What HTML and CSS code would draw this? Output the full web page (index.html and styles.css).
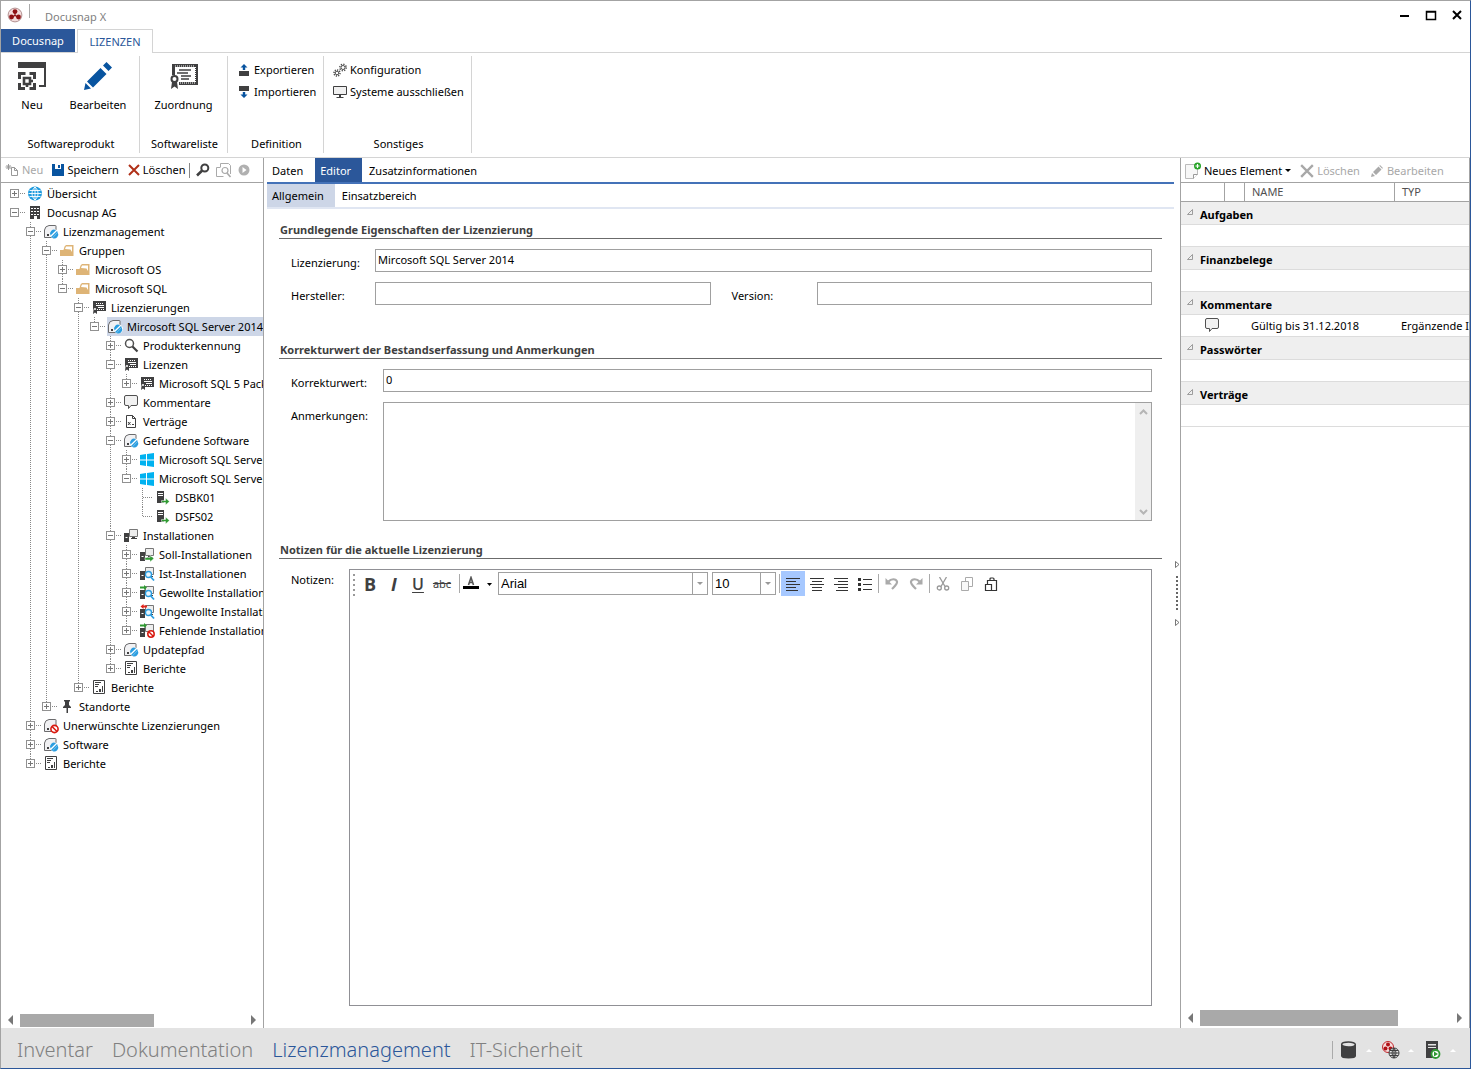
FILE: index.html
```html
<!DOCTYPE html>
<html lang="de">
<head>
<meta charset="utf-8">
<title>Docusnap X</title>
<meta name="viewport" content="width=device-width, initial-scale=1">
<link rel="stylesheet" href="styles.css">
</head>
<body>
<svg class="sprite" aria-hidden="true">
  <symbol id="i-logo" viewBox="0 0 16 16"><circle cx="8" cy="8" r="6.900" fill="#f3dcdc" stroke="#a88" stroke-width=".9"/><g fill="#8f1114"><circle cx="8" cy="4.600" r="2.400"/><circle cx="4.500" cy="10" r="2.400"/><circle cx="11.500" cy="10" r="2.400"/><path d="M7.400 5h1.200v4H7.400zM4.500 10l3.500-2.600 3.500 2.600-1 1L8 9l-2.500 2z"/></g></symbol>
  <symbol id="i-new" viewBox="0 0 28 28"><path fill="#404041" d="M0 0h28v6H0z"/><path fill="none" stroke="#404041" stroke-width="2" d="M27 5v19h-6"/><path fill="none" stroke="#404041" stroke-width="3" d="M1.500 17v-5.500h6M11.500 11.500h5v5.500M16.500 21v5.500h-5M7 26.500H1.500V21"/><path fill="none" stroke="#404041" stroke-width="2.600" d="M6 16h6v6H6zM9 22v3M12 19h3"/></symbol>
  <symbol id="i-pencil-big" viewBox="0 0 28 28"><path fill="#0854a0" d="M0 28l1.500-7 5.500 5.500zM3 19.500L16.500 6l6 6L9 25.500zM19 3.500L22.500 0 28 5.500 24.500 9z"/></symbol>
  <symbol id="i-cert" viewBox="0 0 28 28"><path fill="none" stroke="#404041" stroke-width="3" d="M3.500 13V3.500h23v18H9"/><path fill="none" stroke="#fff" stroke-width="1" stroke-dasharray="1 1" d="M5 4h19M25.500 5v15M10 21h15"/><path stroke="#404041" stroke-width="1.400" d="M9 8h12M7 11h11M11 14h10M11 17h8"/><circle cx="4.500" cy="17" r="3" fill="#fff" stroke="#404041" stroke-width="2"/><path fill="#404041" d="M2 20h5l1 7-3.500-2.500L1 27z"/></symbol>
  <symbol id="i-export" viewBox="0 0 12 14"><path fill="#404041" d="M1 8h10v5H1z"/><path fill="#0854a0" d="M6 1l3.500 3.500H7.200V7H4.800V4.500H2.500z"/></symbol>
  <symbol id="i-import" viewBox="0 0 12 14"><path fill="#404041" d="M1 1h10v5H1z"/><path fill="#0854a0" d="M6 13L2.500 9.500h2.300V7h2.400v2.500h2.300z"/></symbol>
  <symbol id="i-gears" viewBox="0 0 14 14"><g fill="none" stroke="#505050"><circle cx="10" cy="4.500" r="2"/><circle cx="10" cy="4.500" r="3.200" stroke-width="1.500" stroke-dasharray="1.300 1.200"/><circle cx="4" cy="10" r="1.800"/><circle cx="4" cy="10" r="3" stroke-width="1.500" stroke-dasharray="1.200 1.100"/></g></symbol>
  <symbol id="i-monitor" viewBox="0 0 14 14"><path fill="#f0f0f0" stroke="#404041" d="M.5 1.500h13v8H.5z"/><path fill="#404041" d="M6 10h2v2H6zM3.500 12h7v1h-7z"/></symbol>
  <symbol id="i-doc-new" viewBox="0 0 14 14"><path fill="none" stroke="#999" d="M6.500 4.500h3l3 3v5h-6zM9.500 4.500v3h3M3.500 1v6M.5 4h6M1.500 2l4 4M5.500 2l-4 4"/></symbol>
  <symbol id="i-save" viewBox="0 0 12 12"><path fill="#0854a0" d="M0 0h12v12H0z"/><path fill="#fff" d="M3 0h6v5H3z"/><path fill="#0854a0" d="M6 1h2v3H6z"/></symbol>
  <symbol id="i-x" viewBox="0 0 12 12"><path fill="none" stroke="currentColor" stroke-width="2" d="M1 1l10 10M11 1L1 11"/></symbol>
  <symbol id="i-key" viewBox="0 0 14 14"><circle cx="8.800" cy="5" r="3.500" fill="none" stroke="#404041" stroke-width="2"/><path stroke="#404041" stroke-width="2.600" d="M6.200 7.500L1 12.500"/></symbol>
  <symbol id="i-docfind" viewBox="0 0 16 16"><path fill="none" stroke="#aaa" d="M4.500 5V1.500h8l2 2V12M4.500 5.500h-4v9h7"/><circle cx="9" cy="8.500" r="3" fill="#fff" stroke="#aaa" stroke-width="1.200"/><path stroke="#aaa" stroke-width="1.600" d="M11 11l3.500 4"/></symbol>
  <symbol id="i-play" viewBox="0 0 12 12"><circle cx="6" cy="6" r="5.500" fill="#b0b0b0"/><path fill="#fff" d="M4.500 3l4 3-4 3z"/></symbol>
  <symbol id="i-globe" viewBox="0 0 16 16"><circle cx="7" cy="7.500" r="7" fill="#1f9bde"/><path fill="none" stroke="#fff" stroke-width=".9" d="M7 1v13M.5 7.500h13M1.500 4.500h11M1.500 10.500h11M7 1c-4 3.500-4 9.500 0 13 4-3.500 4-9.500 0-13"/></symbol>
  <symbol id="i-building" viewBox="0 0 16 16"><path fill="#404041" d="M2 1h10v13H9v-3H6v3H2z"/><path fill="#fff" d="M3 3h2v1H3zM6 3h2v1H6zM9 3h2v1H9zM3 6h2v1H3zM6 6h2v1H6zM9 6h2v1H9zM3 9h2v1H3zM6 9h2v1H6zM9 9h2v1H9z"/></symbol>
  <symbol id="i-soft-base" viewBox="0 0 16 16"><path fill="#f1f1f3" stroke="#6b6b6d" d="M.5 13.500V6Q1 2 5 1.500h6.500q.5 0 .5.500v11.500z"/><path fill="#404041" d="M3 10h2v2H3z"/></symbol>
  <symbol id="i-soft" viewBox="0 0 16 16"><use href="#i-soft-base"/><circle cx="10.500" cy="10" r="4.500" fill="#fff"/><path fill="#2a9de0" d="M6.500 11.500a4 4 0 0 1 5.500-5.300zM8.500 14l5.300-5.500A4 4 0 0 1 8.500 14z"/><path fill="#2a9de0" d="M7 13l6-6 .8 1.300L8.300 14z"/></symbol>
  <symbol id="i-soft-no" viewBox="0 0 16 16"><use href="#i-soft-base"/><circle cx="10.500" cy="11" r="3.600" fill="#fff" stroke="#d9190f" stroke-width="1.600"/><path stroke="#d9190f" stroke-width="1.600" d="M8 8.500l5 5"/></symbol>
  <symbol id="i-folder" viewBox="0 0 16 16"><path fill="#deb476" d="M0 7h3.500l1-3.500L6 2h7.500v11H0z"/><path fill="#fff" d="M5 6l1-2.500h6V9l-1.500-2.500z"/></symbol>
  <symbol id="i-lic" viewBox="0 0 16 16"><path fill="#404041" d="M1 1h13v10H5v3L3 12.500 1 14l.5-4L1 8z"/><path stroke="#fff" d="M4 3.500h8" stroke-dasharray="1 1"/><path stroke="#fff" d="M4 5.500h8M6 7.500h6"/><path stroke="#fff" d="M5 9.500h7" stroke-dasharray="1 1"/><circle cx="3" cy="9" r="1" fill="#fff"/></symbol>
  <symbol id="i-search" viewBox="0 0 16 16"><circle cx="5.500" cy="5.500" r="4" fill="#fff" stroke="#505050" stroke-width="1.500"/><path stroke="#404041" stroke-width="2.200" d="M8.500 8.500l5 5"/></symbol>
  <symbol id="i-comment" viewBox="0 0 16 16"><path fill="#f1f1f1" stroke="#505050" d="M2 .5h10q1.500 0 1.500 1.500v7q0 1.500-1.500 1.500H7l-2.500 3v-3H2Q.5 10.500.5 9V2Q.5.500 2 .5z"/></symbol>
  <symbol id="i-contract" viewBox="0 0 16 16"><path fill="#fff" stroke="#404041" d="M2.500 1.500h6l3 3v9h-9zM8.500 1.500v3h3"/><path stroke="#404041" d="M4 8l2.500 3M6.500 8L4 11M8 10.500h2"/></symbol>
  <symbol id="i-win" viewBox="0 0 16 16"><path fill="#00b2f0" d="M0 3l6-.9V7.500H0zM7 2l7-1v6.500H7zM0 8.500h6V14l-6-.9zM7 8.500h7V15l-7-1z"/></symbol>
  <symbol id="i-srv" viewBox="0 0 16 16"><path fill="#404041" d="M1 1h7v12H1z"/><path stroke="#fff" d="M2 3.500h5M2 5.500h5"/><path fill="#2f9a32" stroke="#fff" stroke-width=".5" d="M5.500 10.500h4V8l4 3.500-4 3.500v-2.500h-4z"/></symbol>
  <symbol id="i-pc" viewBox="0 0 16 16"><path fill="#404041" d="M0 5h5v9H0z"/><path fill="#fff" d="M1.500 9h2v1h-2z"/><path fill="#eee" stroke="#777" d="M5.500 1.500h8v7h-8z"/><path fill="#404041" d="M8 9h3v1H8zM7 10h6v1H7z"/></symbol>
  <symbol id="i-pc-soll" viewBox="0 0 16 16"><use href="#i-pc"/><path fill="#2f9a32" stroke="#fff" stroke-width=".5" d="M5 10.500h5V8.500l4 3-4 3.500v-2H5z"/></symbol>
  <symbol id="i-lens" viewBox="0 0 16 16"><circle cx="8.500" cy="8.500" r="3" fill="#e8f6ff" stroke="#2a9de0" stroke-width="1.300"/><path stroke="#2a9de0" stroke-width="1.800" d="M10.800 11l3.200 3.500"/></symbol>
  <symbol id="i-pc-ist" viewBox="0 0 16 16"><use href="#i-pc"/><use href="#i-lens"/></symbol>
  <symbol id="i-pc-want" viewBox="0 0 16 16"><use href="#i-pc"/><use href="#i-lens"/><path fill="#2f9a32" d="M0 1.500h4V0l3 2.500L4 5V3.500H0z"/></symbol>
  <symbol id="i-pc-unw" viewBox="0 0 16 16"><use href="#i-pc"/><use href="#i-lens"/><path fill="#e2231a" d="M7 1.500H3.500V0L.5 2.500l3 2.500V3.500H7z"/></symbol>
  <symbol id="i-pc-miss" viewBox="0 0 16 16"><use href="#i-pc"/><circle cx="11" cy="11" r="3.200" fill="#fff" stroke="#d9190f" stroke-width="1.500"/><path stroke="#d9190f" stroke-width="1.500" d="M9 9l4 4"/><path fill="#2f9a32" d="M0 1.500h4V0l3 2.500L4 5V3.500H0z"/></symbol>
  <symbol id="i-report" viewBox="0 0 16 16"><path fill="#fff" stroke="#404041" d="M1.500.5h11v13h-11z"/><path fill="#404041" d="M3 2h6v1H3zM3 4h4v1H3zM3 6h3v1H3zM4 11h2v1H4zM7 9h2v3H7zM10 6h1v6h-1z"/></symbol>
  <symbol id="i-pin" viewBox="0 0 16 16"><path fill="#404041" d="M4 1h6v1L9 3v3l2 2v1H8v5H6.500V9H3V8l2-2V3L4 2z"/></symbol>
  <symbol id="i-elem" viewBox="0 0 16 18"><path fill="#f7f7f7" stroke="#bbb" d="M.5 2.500h12v10l-4 4h-8z"/><path fill="#fff" stroke="#999" d="M8.500 16.500v-4h4"/><circle cx="12.500" cy="4" r="3.500" fill="#27a327"/><path stroke="#fff" stroke-width="1.200" d="M10.500 4h4M12.500 2v4"/></symbol>
  <symbol id="i-pencil" viewBox="0 0 12 12"><path fill="#aaa" d="M0 12l1-4 3 3zM2 7l5.500-5.500 3 3L5 10zM8.300.8L9 0l3 3-.8.8z"/></symbol>
  <symbol id="i-undo" viewBox="0 0 14 14"><path fill="none" stroke="#aaa" stroke-width="2.200" d="M3.500 4.500C6 1.500 11 1.500 12 4.500c.6 2.500-2.500 5-5 7.500"/><path fill="#aaa" d="M.5 1v6.500H7z"/></symbol>
  <symbol id="i-cut" viewBox="0 0 14 14"><path stroke="#999" stroke-width="1.300" d="M3.500 0L9 9.500M10.500 0L5 9.500"/><g fill="none" stroke="#999" stroke-width="1.300"><circle cx="3.300" cy="11" r="2"/><circle cx="10.700" cy="11" r="2"/></g></symbol>
  <symbol id="i-copy" viewBox="0 0 14 14"><path fill="#fff" stroke="#aaa" d="M5.500.5h7v9h-7z"/><path fill="#f8f8f8" stroke="#aaa" d="M1.500 4.500h7v9h-7z"/></symbol>
  <symbol id="i-paste" viewBox="0 0 14 14"><path fill="none" stroke="#333" stroke-width="1.200" d="M3.500 7V3.500h9v10H8M6 3V2q0-1 1-1h2q1 0 1 1v1"/><path fill="#fff" stroke="#333" stroke-width="1.200" d="M1.500 7.500h6v6h-6z"/></symbol>
  <symbol id="i-db" viewBox="0 0 16 18"><path fill="#404041" d="M0 3h15v12q0 2.500-7.500 2.500T0 15z"/><ellipse cx="7.500" cy="3.500" rx="6.800" ry="2.500" fill="#e3e3e3" stroke="#404041" stroke-width="1.500"/></symbol>
  <symbol id="i-net" viewBox="0 0 18 18"><circle cx="6" cy="6" r="5.500" fill="#f6dcdc" stroke="#c1272d"/><g fill="#b01217"><circle cx="6" cy="3.500" r="2"/><circle cx="3.500" cy="7.500" r="2"/><circle cx="8.500" cy="7.500" r="2"/></g><circle cx="12" cy="12" r="5" fill="#e8e8e8" stroke="#404041"/><path fill="none" stroke="#404041" d="M12 7v10M7 12h10M8 9.500h8M8 14.500h8M12 7q-4 5 0 10 4-5 0-10"/></symbol>
  <symbol id="i-srvrun" viewBox="0 0 16 18"><path fill="#404041" d="M1 0h12v17H1z"/><path fill="#e3e3e3" d="M3 3h8v1.500H3zM3 6h8v1H3z"/><circle cx="10.500" cy="13" r="4" fill="#fff" stroke="#2f9a32" stroke-width="1.800"/><path fill="#2f9a32" d="M9 10.500l4 2.500-4 2.500z"/></symbol>
</svg>

<div class="app">
  <header class="titlebar">
    <svg class="ic16"><use href="#i-logo"/></svg>
    <span class="titlebar-sep"></span>
    <span class="titlebar-name">Docusnap X</span>
    <div class="window-buttons">
      <button aria-label="Minimieren"><svg viewBox="0 0 12 12"><path d="M1 7h9" stroke="#000" stroke-width="2"/></svg></button>
      <button aria-label="Maximieren"><svg viewBox="0 0 12 12"><path d="M1.500 2.500h9v8h-9zM1 3h10" fill="none" stroke="#000" stroke-width="1.500"/></svg></button>
      <button aria-label="Schließen"><svg viewBox="0 0 12 12"><path d="M2 2l8 8M10 2l-8 8" stroke="#000" stroke-width="2"/></svg></button>
    </div>
  </header>

  <nav class="ribbon-tabs">
    <button class="ribbon-file">Docusnap</button>
    <button class="ribbon-tab">LIZENZEN</button>
  </nav>

  <div class="ribbon">
    <section class="ribbon-group">
      <div class="ribbon-big pair">
        <button class="big-btn"><svg><use href="#i-new"/></svg>Neu</button>
        <button class="big-btn"><svg><use href="#i-pencil-big"/></svg>Bearbeiten</button>
      </div>
      <span class="ribbon-caption">Softwareprodukt</span>
    </section>
    <section class="ribbon-group">
      <div class="ribbon-big">
        <button class="big-btn"><svg><use href="#i-cert"/></svg>Zuordnung</button>
      </div>
      <span class="ribbon-caption">Softwareliste</span>
    </section>
    <section class="ribbon-group">
      <div class="ribbon-small">
        <button class="small-btn"><svg class="ic12x14"><use href="#i-export"/></svg>Exportieren</button>
        <button class="small-btn"><svg class="ic12x14"><use href="#i-import"/></svg>Importieren</button>
      </div>
      <span class="ribbon-caption">Definition</span>
    </section>
    <section class="ribbon-group">
      <div class="ribbon-small tight">
        <button class="small-btn"><svg class="ic14"><use href="#i-gears"/></svg>Konfiguration</button>
        <button class="small-btn"><svg class="ic14"><use href="#i-monitor"/></svg>Systeme ausschließen</button>
      </div>
      <span class="ribbon-caption">Sonstiges</span>
    </section>
  </div>

  <main class="workspace">
    <aside class="nav-pane">
      <div class="pane-toolbar">
        <button class="tool" disabled><svg class="ic14"><use href="#i-doc-new"/></svg>Neu</button>
        <button class="tool"><svg class="ic12"><use href="#i-save"/></svg>Speichern</button>
        <button class="tool"><svg class="ic12 red"><use href="#i-x"/></svg>Löschen</button>
        <span class="tool-sep"></span>
        <button class="tool" aria-label="Schlüssel"><svg class="ic14"><use href="#i-key"/></svg></button>
        <button class="tool" aria-label="Suchen"><svg class="ic16"><use href="#i-docfind"/></svg></button>
        <button class="tool" aria-label="Ausführen"><svg class="ic12"><use href="#i-play"/></svg></button>
      </div>
      <ul class="tree">
        <li><div class="node"><button class="tog plus" aria-label="Öffnen"></button><a href="#"><svg><use href="#i-globe"/></svg>Übersicht</a></div></li>
        <li><div class="node"><button class="tog" aria-label="Schließen"></button><a href="#"><svg><use href="#i-building"/></svg>Docusnap AG</a></div>
          <ul>
            <li><div class="node"><button class="tog" aria-label="Schließen"></button><a href="#"><svg><use href="#i-soft"/></svg>Lizenzmanagement</a></div>
              <ul>
                <li><div class="node"><button class="tog" aria-label="Schließen"></button><a href="#"><svg><use href="#i-folder"/></svg>Gruppen</a></div>
                  <ul>
                    <li><div class="node"><button class="tog plus" aria-label="Öffnen"></button><a href="#"><svg><use href="#i-folder"/></svg>Microsoft OS</a></div></li>
                    <li><div class="node"><button class="tog" aria-label="Schließen"></button><a href="#"><svg><use href="#i-folder"/></svg>Microsoft SQL</a></div>
                      <ul>
                        <li><div class="node"><button class="tog" aria-label="Schließen"></button><a href="#"><svg><use href="#i-lic"/></svg>Lizenzierungen</a></div>
                          <ul>
                            <li><div class="node"><button class="tog" aria-label="Schließen"></button><a href="#" class="selected"><svg><use href="#i-soft"/></svg>Mircosoft SQL Server 2014</a></div>
                              <ul>
                                <li><div class="node"><button class="tog plus" aria-label="Öffnen"></button><a href="#"><svg><use href="#i-search"/></svg>Produkterkennung</a></div></li>
                                <li><div class="node"><button class="tog" aria-label="Schließen"></button><a href="#"><svg><use href="#i-lic"/></svg>Lizenzen</a></div>
                                  <ul>
                                    <li><div class="node"><button class="tog plus" aria-label="Öffnen"></button><a href="#"><svg><use href="#i-lic"/></svg>Microsoft SQL 5 Pack</a></div></li>
                                  </ul>
                                </li>
                                <li><div class="node"><button class="tog plus" aria-label="Öffnen"></button><a href="#"><svg><use href="#i-comment"/></svg>Kommentare</a></div></li>
                                <li><div class="node"><button class="tog plus" aria-label="Öffnen"></button><a href="#"><svg><use href="#i-contract"/></svg>Verträge</a></div></li>
                                <li><div class="node"><button class="tog" aria-label="Schließen"></button><a href="#"><svg><use href="#i-soft"/></svg>Gefundene Software</a></div>
                                  <ul>
                                    <li><div class="node"><button class="tog plus" aria-label="Öffnen"></button><a href="#"><svg><use href="#i-win"/></svg>Microsoft SQL Server</a></div></li>
                                    <li><div class="node"><button class="tog" aria-label="Schließen"></button><a href="#"><svg><use href="#i-win"/></svg>Microsoft SQL Server</a></div>
                                      <ul>
                                        <li><div class="node leaf"><a href="#"><svg><use href="#i-srv"/></svg>DSBK01</a></div></li>
                                        <li><div class="node leaf"><a href="#"><svg><use href="#i-srv"/></svg>DSFS02</a></div></li>
                                      </ul>
                                    </li>
                                  </ul>
                                </li>
                                <li><div class="node"><button class="tog" aria-label="Schließen"></button><a href="#"><svg><use href="#i-pc"/></svg>Installationen</a></div>
                                  <ul>
                                    <li><div class="node"><button class="tog plus" aria-label="Öffnen"></button><a href="#"><svg><use href="#i-pc-soll"/></svg>Soll-Installationen</a></div></li>
                                    <li><div class="node"><button class="tog plus" aria-label="Öffnen"></button><a href="#"><svg><use href="#i-pc-ist"/></svg>Ist-Installationen</a></div></li>
                                    <li><div class="node"><button class="tog plus" aria-label="Öffnen"></button><a href="#"><svg><use href="#i-pc-want"/></svg>Gewollte Installationen</a></div></li>
                                    <li><div class="node"><button class="tog plus" aria-label="Öffnen"></button><a href="#"><svg><use href="#i-pc-unw"/></svg>Ungewollte Installationen</a></div></li>
                                    <li><div class="node"><button class="tog plus" aria-label="Öffnen"></button><a href="#"><svg><use href="#i-pc-miss"/></svg>Fehlende Installationen</a></div></li>
                                  </ul>
                                </li>
                                <li><div class="node"><button class="tog plus" aria-label="Öffnen"></button><a href="#"><svg><use href="#i-soft"/></svg>Updatepfad</a></div></li>
                                <li><div class="node"><button class="tog plus" aria-label="Öffnen"></button><a href="#"><svg><use href="#i-report"/></svg>Berichte</a></div></li>
                              </ul>
                            </li>
                          </ul>
                        </li>
                        <li><div class="node"><button class="tog plus" aria-label="Öffnen"></button><a href="#"><svg><use href="#i-report"/></svg>Berichte</a></div></li>
                      </ul>
                    </li>
                  </ul>
                </li>
                <li><div class="node"><button class="tog plus" aria-label="Öffnen"></button><a href="#"><svg><use href="#i-pin"/></svg>Standorte</a></div></li>
              </ul>
            </li>
            <li><div class="node"><button class="tog plus" aria-label="Öffnen"></button><a href="#"><svg><use href="#i-soft-no"/></svg>Unerwünschte Lizenzierungen</a></div></li>
            <li><div class="node"><button class="tog plus" aria-label="Öffnen"></button><a href="#"><svg><use href="#i-soft"/></svg>Software</a></div></li>
            <li><div class="node"><button class="tog plus" aria-label="Öffnen"></button><a href="#"><svg><use href="#i-report"/></svg>Berichte</a></div></li>
          </ul>
        </li>
      </ul>
      <div class="hscroll">
        <span class="arrow-left"></span>
        <span class="track"><span class="thumb"></span></span>
        <span class="arrow-right"></span>
      </div>
    </aside>

    <div class="center">
      <div class="content">
        <nav class="tabs">
          <button>Daten</button>
          <button class="active">Editor</button>
          <button>Zusatzinformationen</button>
        </nav>
        <nav class="subtabs">
          <button class="active">Allgemein</button>
          <button>Einsatzbereich</button>
        </nav>
        <form class="form">
          <section>
            <h2>Grundlegende Eigenschaften der Lizenzierung</h2>
            <div class="field-row">
              <label for="lizenzierung">Lizenzierung:</label>
              <input id="lizenzierung" type="text" value="Mircosoft SQL Server 2014">
            </div>
            <div class="field-row two">
              <label for="hersteller">Hersteller:</label>
              <input id="hersteller" type="text">
              <label for="version" class="second">Version:</label>
              <input id="version" type="text">
            </div>
          </section>
          <section class="correction">
            <h2>Korrekturwert der Bestandserfassung und Anmerkungen</h2>
            <div class="field-row wide">
              <label for="korrektur">Korrekturwert:</label>
              <input id="korrektur" type="text" value="0">
            </div>
            <div class="field-row wide">
              <label for="anmerkungen">Anmerkungen:</label>
              <div class="memo">
                <textarea id="anmerkungen"></textarea>
                <div class="vscroll">
                  <svg viewBox="0 0 9 6"><path d="M1 5l3.500-3.500L8 5" fill="none" stroke="#b5b5b5" stroke-width="2"/></svg>
                  <svg viewBox="0 0 9 6"><path d="M1 1l3.500 3.500L8 1" fill="none" stroke="#b5b5b5" stroke-width="2"/></svg>
                </div>
              </div>
            </div>
          </section>
          <section class="notes">
            <h2>Notizen für die aktuelle Lizenzierung</h2>
            <div class="field-row note">
              <label for="notizen">Notizen:</label>
              <div class="rte">
                <div class="rte-bar">
                  <span class="grip"></span>
                  <button type="button" class="rte-b">B</button>
                  <button type="button" class="rte-i">I</button>
                  <button type="button" class="rte-u">U</button>
                  <button type="button" class="rte-s">abc</button>
                  <span class="rte-sep"></span>
                  <button type="button" class="rte-color" aria-label="Schriftfarbe"><svg viewBox="0 0 30 16"><path d="M5.500 9L8 1.500 10.500 9M6.500 6.500h3" fill="none" stroke="#555" stroke-width="1.600"/><path d="M0 10h16v3H0z"/><path d="M24 7h5l-2.500 3z"/></svg></button>
                  <span class="combo combo-font"><select aria-label="Schriftart"><option>Arial</option></select></span>
                  <span class="combo combo-size"><select aria-label="Schriftgröße"><option>10</option></select></span>
                  <span class="rte-sep near"></span>
                  <button type="button" class="active" aria-label="Linksbündig"><svg viewBox="0 0 14 14"><path d="M0 1.500h14M0 4.500h10M0 7.500h14M0 10.500h10M0 13.500h12" stroke="#333"/></svg></button>
                  <button type="button" aria-label="Zentriert"><svg viewBox="0 0 14 14"><path d="M0 1.500h14M2 4.500h10M0 7.500h14M2 10.500h10M2 13.500h10" stroke="#333"/></svg></button>
                  <button type="button" aria-label="Rechtsbündig"><svg viewBox="0 0 14 14"><path d="M0 1.500h14M4 4.500h10M0 7.500h14M4 10.500h10M2 13.500h12" stroke="#333"/></svg></button>
                  <button type="button" aria-label="Liste"><svg viewBox="0 0 14 14"><path d="M5 2.500h9M5 7.500h9M5 12.500h9" stroke="#333"/><path d="M0 1h3v3H0zM0 6h3v3H0zM0 11h3v3H0z" fill="#333"/></svg></button>
                  <span class="rte-sep near"></span>
                  <button type="button" aria-label="Rückgängig"><svg><use href="#i-undo"/></svg></button>
                  <button type="button" aria-label="Wiederholen"><svg class="flip"><use href="#i-undo"/></svg></button>
                  <span class="rte-sep near"></span>
                  <button type="button" aria-label="Ausschneiden"><svg><use href="#i-cut"/></svg></button>
                  <button type="button" aria-label="Kopieren"><svg><use href="#i-copy"/></svg></button>
                  <button type="button" aria-label="Einfügen"><svg><use href="#i-paste"/></svg></button>
                </div>
                <textarea id="notizen"></textarea>
              </div>
            </div>
          </section>
        </form>
      </div>
      <div class="splitter">
        <svg viewBox="0 0 5 7"><path d="M.5.5v6l3.500-3z" fill="#fff" stroke="#555" stroke-width=".8"/></svg>
        <span class="splitter-dots"></span>
        <svg viewBox="0 0 5 7"><path d="M.5.5v6l3.500-3z" fill="#fff" stroke="#555" stroke-width=".8"/></svg>
      </div>
    </div>

    <aside class="detail-pane">
      <div class="pane-toolbar detail-toolbar">
        <button class="tool"><svg class="elem"><use href="#i-elem"/></svg>Neues Element<span class="caret"></span></button>
        <button class="tool" disabled><svg class="ic14"><use href="#i-x"/></svg>Löschen</button>
        <button class="tool" disabled><svg class="ic12"><use href="#i-pencil"/></svg>Bearbeiten</button>
      </div>
      <div class="table-wrap">
        <table>
          <colgroup><col class="c1"><col class="c2"><col class="c3"><col class="c4"></colgroup>
          <thead><tr><th></th><th></th><th>NAME</th><th>TYP</th></tr></thead>
          <tbody>
            <tr class="group"><th colspan="4"><svg viewBox="0 0 6 6"><path d="M5.500.5v5h-5z" fill="none" stroke="#888" stroke-width=".8"/></svg>Aufgaben</th></tr>
            <tr><td colspan="4"></td></tr>
            <tr class="group"><th colspan="4"><svg viewBox="0 0 6 6"><path d="M5.500.5v5h-5z" fill="none" stroke="#888" stroke-width=".8"/></svg>Finanzbelege</th></tr>
            <tr><td colspan="4"></td></tr>
            <tr class="group"><th colspan="4"><svg viewBox="0 0 6 6"><path d="M5.500.5v5h-5z" fill="none" stroke="#888" stroke-width=".8"/></svg>Kommentare</th></tr>
            <tr><td class="icon-cell"><svg class="ic16"><use href="#i-comment"/></svg></td><td></td><td>Gültig bis 31.12.2018</td><td>Ergänzende Informationen</td></tr>
            <tr class="group"><th colspan="4"><svg viewBox="0 0 6 6"><path d="M5.500.5v5h-5z" fill="none" stroke="#888" stroke-width=".8"/></svg>Passwörter</th></tr>
            <tr><td colspan="4"></td></tr>
            <tr class="group"><th colspan="4"><svg viewBox="0 0 6 6"><path d="M5.500.5v5h-5z" fill="none" stroke="#888" stroke-width=".8"/></svg>Verträge</th></tr>
            <tr><td colspan="4"></td></tr>
          </tbody>
        </table>
      </div>
      <div class="hscroll hscroll-detail">
        <span class="arrow-left"></span>
        <span class="track"><span class="thumb"></span></span>
        <span class="arrow-right"></span>
      </div>
    </aside>
  </main>

  <footer class="modules">
    <nav>
      <a href="#">Inventar</a>
      <a href="#">Dokumentation</a>
      <a href="#" class="active">Lizenzmanagement</a>
      <a href="#">IT-Sicherheit</a>
    </nav>
    <div class="status">
      <svg><use href="#i-db"/></svg><span class="up"></span>
      <svg><use href="#i-net"/></svg><span class="up"></span>
      <svg><use href="#i-srvrun"/></svg><span class="up"></span>
    </div>
  </footer>
</div>
</body>
</html>
```
FILE: styles.css
```css
* { box-sizing: border-box; }

body {
  margin: 0;
  background: #fff;
  color: #000;
  font: 11px/16px "Noto Sans", "Open Sans", sans-serif;
}

button, input, select, textarea { font: inherit; color: inherit; }
button { border: 0; padding: 0; background: none; white-space: nowrap; }
a { color: inherit; text-decoration: none; }
svg { display: block; flex: none; }

.sprite { display: none; }
.ic12 { width: 12px; height: 12px; }
.ic12x14 { width: 12px; height: 14px; }
.ic14 { width: 14px; height: 14px; }
.ic16 { width: 16px; height: 16px; }
.red { color: #b03018; }

.app {
  display: flex;
  flex-direction: column;
  height: 100vh;
  border: 1px solid #a3a3a3;
  border-right-color: #2b579a;
  border-bottom-color: #2b579a;
}

/* Title bar */
.titlebar {
  display: flex;
  align-items: center;
  height: 28px;
  padding-left: 6px;
}
.titlebar-sep {
  align-self: flex-start;
  width: 1px;
  height: 14px;
  margin: 3px 15px 0 6px;
  background: #aaa;
}
.titlebar-name { padding-top: 3px; color: #808080; }
.window-buttons { display: flex; gap: 14px; margin-left: auto; padding-right: 7px; }
.window-buttons svg { width: 12px; height: 12px; }

/* Ribbon */
.ribbon-tabs {
  display: flex;
  gap: 2px;
  height: 24px;
  border-bottom: 1px solid #d4d4d4;
}
.ribbon-file { width: 74px; padding-top: 1px; background: #2b579a; color: #fff; }
.ribbon-tab {
  width: 76px;
  height: 24px;
  border: 1px solid #d4d4d4;
  border-bottom: 0;
  background: #fff;
  color: #2b579a;
}
.ribbon {
  display: grid;
  grid-template-columns: 139px 88px 96px 148px;
  height: 105px;
  padding: 3px 0 4px;
  border-bottom: 1px solid #d4d4d4;
}
.ribbon-group {
  display: flex;
  flex-direction: column;
  justify-content: space-between;
  border-right: 1px solid #d4d4d4;
}
.ribbon-big { display: flex; justify-content: center; padding-top: 6px; }
.ribbon-big.pair { padding-right: 10px; }
.big-btn {
  display: flex;
  flex-direction: column;
  align-items: center;
  gap: 7px;
  min-width: 66px;
}
.big-btn svg { width: 28px; height: 28px; }
.ribbon-small {
  display: flex;
  flex-direction: column;
  gap: 6px;
  padding: 6px 0 0 10px;
}
.ribbon-small.tight { padding-left: 9px; }
.small-btn { display: flex; align-items: center; gap: 4px; height: 16px; }
.tight .small-btn { gap: 3px; }
.ribbon-caption { padding: 0 0 1px 2px; text-align: center; }

/* Workspace */
.workspace {
  display: grid;
  grid-template-columns: 263px minmax(0, 1fr) 290px;
  flex: 1;
  min-height: 0;
}
.nav-pane, .detail-pane { display: flex; flex-direction: column; min-width: 0; overflow: hidden; }
.nav-pane { border-right: 1px solid #a3a3a3; }
.detail-pane { border: 0 solid #a3a3a3; border-width: 0 1px; }

.pane-toolbar {
  display: flex;
  flex: none;
  align-items: center;
  gap: 9px;
  height: 25px;
  padding-left: 4px;
  border-bottom: 1px solid #a3a3a3;
}
.tool { display: flex; align-items: center; gap: 3px; }
.tool:disabled { color: #a8a8a8; }
.tool-sep { width: 1px; height: 15px; margin: 0 -3px 0 -6px; background: #888; }
.nav-pane .tool:nth-last-child(-n+2) { margin-left: -3px; }

/* Tree */
.tree { flex: 1; min-height: 0; margin: 0; padding: 1px 0 0 9px; overflow: hidden; list-style: none; }
.tree ul { margin: 0; padding-left: 16px; list-style: none; }
.tree ul > li {
  background: repeating-linear-gradient(#888 0 1px, transparent 1px 2px) 4px 0 / 1px 100% no-repeat;
}
.tree ul > li:last-child { background-size: 1px 10px; }
.node { display: flex; align-items: center; height: 19px; }
.node::before {
  content: "";
  flex: none;
  order: 1;
  width: 6px;
  height: 1px;
  margin-right: 2px;
  background: repeating-linear-gradient(90deg, transparent 0 1px, #888 1px 2px);
}
.node.leaf::before { width: 11px; margin: 0 2px 0 4px; }
.node a {
  display: flex;
  flex: 1 0 auto;
  order: 2;
  align-items: center;
  gap: 3px;
  height: 19px;
  padding-left: 1px;
  white-space: nowrap;
}
.node svg { width: 16px; height: 16px; }
.node .selected { background: #cdd6e7; }
.tog {
  flex: none;
  width: 9px;
  height: 9px;
  border: 1px solid #919191;
  background: linear-gradient(#777, #777) center / 5px 1px no-repeat, #fff;
}
.tog.plus {
  background: linear-gradient(#777, #777) center / 5px 1px no-repeat,
    linear-gradient(#777, #777) center / 1px 5px no-repeat, #fff;
}

/* Horizontal scrollbars */
.hscroll {
  display: flex;
  flex: none;
  align-items: center;
  gap: 7px;
  height: 16px;
  padding: 0 7px;
}
.track { flex: 1; }
.thumb { display: block; width: 60%; height: 13px; background: #a9a9a9; }
.arrow-left, .arrow-right { width: 0; height: 0; border: 5px solid transparent; }
.arrow-left { border-left: 0; border-right-color: #777; }
.arrow-right { border-right: 0; border-left-color: #777; }
.hscroll-detail { height: 20px; }
.hscroll-detail .thumb { width: 79%; height: 16px; }

/* Center */
.center { display: grid; grid-template-columns: minmax(0, 1fr) 6px; min-height: 0; }
.content { display: flex; flex-direction: column; min-height: 0; padding-left: 3px; }
.tabs, .subtabs { display: flex; flex: none; height: 26px; border-bottom: 2px solid #4472b8; }
.tabs button, .subtabs button { padding: 1px 7px 0; }
.tabs button:first-child { padding: 1px 12px 0 5px; }
.tabs .active { padding: 1px 11px 0 5px; background: #2b579a; color: #fff; }
.subtabs { height: 25px; border-bottom-color: #e0e6f2; }
.subtabs .active:first-child { padding: 1px 11px 0 5px; background: #cdd6e7; }

.form { display: flex; flex: 1; flex-direction: column; min-height: 0; padding: 11px 12px 22px; }
.form section { display: flex; flex-direction: column; gap: 10px; }
.form .correction { margin-top: 35px; }
.form .notes { flex: 1; min-height: 0; margin-top: 19px; }
h2 {
  height: 19px;
  margin: 0;
  padding: 1px 0 0 1px;
  border-bottom: 1px solid #6b6b6b;
  color: #404040;
  font-size: 11px;
  font-weight: 700;
  line-height: 18px;
}
.field-row { display: grid; grid-template-columns: 84px minmax(0, 1fr); padding: 0 10px 0 12px; }
.field-row.two { grid-template-columns: 84px minmax(0, 1fr) 106px minmax(0, 1fr); }
.field-row.wide { grid-template-columns: 92px minmax(0, 1fr); }
.field-row.note { grid-template-columns: 58px minmax(0, 1fr); flex: 1; min-height: 0; }
.field-row label { padding-top: 6px; }
.field-row.note label { padding-top: 3px; }
.field-row .second { padding-left: 21px; }
.field-row input {
  min-width: 0;
  height: 23px;
  padding: 0 3px 2px 2px;
  border: 1px solid #a0a0a0;
  background: #fff;
}
.memo { display: flex; height: 119px; border: 1px solid #a0a0a0; }
.memo textarea { flex: 1; border: 0; padding: 2px; resize: none; }
.vscroll {
  display: flex;
  flex-direction: column;
  align-items: center;
  justify-content: space-between;
  width: 16px;
  padding: 6px 0 5px;
  background: #efefef;
}
.vscroll svg { width: 9px; height: 6px; }

/* Rich text editor */
.rte { display: flex; flex-direction: column; min-width: 0; border: 1px solid #909095; }
.rte-bar { display: flex; flex: none; align-items: flex-start; height: 29px; padding: 1px 0 0 3px; }
.rte-bar button { display: grid; place-items: center; flex: none; width: 24px; height: 25px; }
.rte-bar button svg { width: 14px; height: 14px; }
.rte-bar button.active { background: #a6c8ff; }
.rte textarea { flex: 1; border: 0; padding: 4px; resize: none; }
.grip {
  width: 2px;
  height: 22px;
  margin: 3px 3px 0 0;
  background: repeating-linear-gradient(#999 0 2px, transparent 2px 5px);
}
.rte-bar .rte-b, .rte-bar .rte-i, .rte-bar .rte-u {
  color: #404041;
  font-family: "Open Sans", "Noto Sans", sans-serif;
  font-size: 18px;
  line-height: 24px;
}
.rte-bar .rte-b, .rte-bar .rte-i { font-weight: 700; }
.rte-bar .rte-i { font-style: italic; }
.rte-bar .rte-u { font-size: 16px; font-weight: 600; text-decoration: underline; text-underline-offset: 2px; }
.rte-bar .rte-s { color: #404041; font-size: 11px; text-decoration: line-through; }
.rte-sep { width: 1px; height: 19px; margin: 3px 3px 0 5px; background: #aaa; }
.rte-sep.near { margin: 3px 1px 0; }
.combo + .rte-sep { margin-left: 3px; }
.rte-bar .rte-color { width: 30px; margin-right: 5px; }
.rte-bar .rte-color svg { width: 30px; height: 16px; }
.combo {
  display: flex;
  margin-top: 1px;
  height: 23px;
  border: 1px solid #a0a0a0;
}
.combo-font { width: 210px; margin-right: 4px; }
.combo-size { width: 64px; }
.combo::after {
  content: "";
  width: 0;
  height: 0;
  margin: 9px 4px;
  border: 3px solid transparent;
  border-top-color: #999;
  border-bottom: 0;
}
.combo select {
  flex: 1;
  min-width: 0;
  padding: 0 2px;
  border: 0;
  border-right: 1px solid #a0a0a0;
  background: #fff;
  appearance: none;
  font: 13px/16px "Liberation Sans", sans-serif;
}
.flip { transform: scaleX(-1); }

/* Splitter handle */
.splitter { display: flex; flex-direction: column; align-items: center; gap: 8px; padding-top: 403px; }
.splitter svg { width: 5px; height: 7px; }
.splitter-dots { width: 2px; height: 35px; background: repeating-linear-gradient(#666 0 2px, transparent 2px 4px); }

/* Detail pane */
.detail-toolbar { gap: 9px; }
.detail-toolbar .tool { padding-top: 1px; }
.detail-toolbar .tool:last-child { margin-left: 2px; gap: 4px; }
.elem { width: 16px; height: 18px; }
.caret { border: 3px solid transparent; border-top-color: #000; border-bottom: 0; }
.table-wrap { flex: 1; min-height: 0; overflow: hidden; }
table { width: 374px; border-collapse: separate; border-spacing: 0; table-layout: fixed; }
.c1 { width: 44px; }
.c2 { width: 20px; }
.c3 { width: 150px; }
.c4 { width: 160px; }
th, td { padding: 0 6px; text-align: left; white-space: nowrap; }
thead th {
  height: 19px;
  padding: 0 7px;
  border: 0 solid #a3a3a3;
  border-width: 0 1px 1px 0;
  color: #505050;
  font-weight: 400;
}
.group th { height: 23px; padding: 4px 6px 0; border-bottom: 1px solid #dcdcdc; background: #efefef; }
.group svg { display: inline-block; width: 6px; height: 6px; margin-right: 7px; vertical-align: 4px; }
td { height: 22px; border-bottom: 1px solid #dcdcdc; }
.icon-cell { padding: 0 0 0 24px; }

/* Module bar */
.modules {
  display: flex;
  flex: none;
  align-items: center;
  justify-content: space-between;
  height: 40px;
  padding: 4px 14px 0 16px;
  background: #e3e3e3;
}
.modules nav { display: flex; gap: 19px; color: #808080; font: 300 20px/28px "Noto Sans", "Open Sans", sans-serif; }
.modules .active { color: #2b579a; }
.status { display: flex; align-items: center; gap: 8px; padding-left: 7px; border-left: 1px solid #aaa; }
.status svg { width: 18px; height: 18px; }
.up { margin-right: 2px; border: 3px solid transparent; border-bottom-color: #fff; border-top: 0; }
.up:last-child { margin-right: 0; }
```
